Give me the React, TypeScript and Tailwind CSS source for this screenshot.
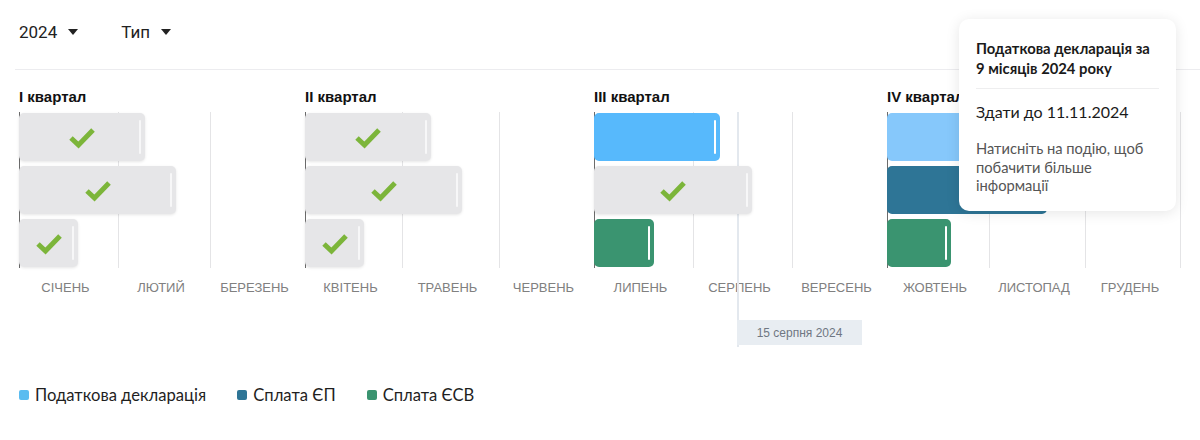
import React from "react";

type Bar = { w: number; kind: "done" | "blue" | "lightblue" | "teal" | "green" };

const quarters: {
  title: string;
  months: { name: string; w: string }[];
  bars: Bar[];
}[] = [
  {
    title: "I квартал",
    months: [
      { name: "СІЧЕНЬ", w: "w-[99px]" },
      { name: "ЛЮТИЙ", w: "w-[92px]" },
      { name: "БЕРЕЗЕНЬ", w: "w-[95px]" },
    ],
    bars: [
      { w: 126, kind: "done" },
      { w: 157, kind: "done" },
      { w: 59, kind: "done" },
    ],
  },
  {
    title: "II квартал",
    months: [
      { name: "КВІТЕНЬ", w: "w-[97px]" },
      { name: "ТРАВЕНЬ", w: "w-[97px]" },
      { name: "ЧЕРВЕНЬ", w: "w-[95px]" },
    ],
    bars: [
      { w: 126, kind: "done" },
      { w: 157, kind: "done" },
      { w: 59, kind: "done" },
    ],
  },
  {
    title: "III квартал",
    months: [
      { name: "ЛИПЕНЬ", w: "w-[99px]" },
      { name: "СЕРПЕНЬ", w: "w-[99px]" },
      { name: "ВЕРЕСЕНЬ", w: "w-[95px]" },
    ],
    bars: [
      { w: 126, kind: "blue" },
      { w: 158, kind: "done" },
      { w: 60, kind: "green" },
    ],
  },
  {
    title: "IV квартал",
    months: [
      { name: "ЖОВТЕНЬ", w: "w-[102px]" },
      { name: "ЛИСТОПАД", w: "w-[96px]" },
      { name: "ГРУДЕНЬ", w: "w-[96px]" },
    ],
    bars: [
      { w: 128, kind: "lightblue" },
      { w: 160, kind: "teal" },
      { w: 64, kind: "green" },
    ],
  },
];

const barBg: Record<Bar["kind"], string> = {
  done: "bg-[#e6e6e8] shadow-[0_1px_3px_rgba(0,0,0,0.10)]",
  blue: "bg-[#57b9fc]",
  lightblue: "bg-[#86c8fb]",
  teal: "bg-[#2e7596]",
  green: "bg-[#3a9470]",
};

function Check() {
  return (
    <svg width="28" height="24" viewBox="0 0 28 24">
      <path
        d="M3 13 L10.5 20 L25 5"
        fill="none"
        stroke="#7cb53a"
        strokeWidth="5"
        strokeLinejoin="miter"
      />
    </svg>
  );
}

function Caret() {
  return (
    <svg width="10" height="6" viewBox="0 0 10 6" className="ml-[11px]">
      <path d="M0 0 L10 0 L5 6 Z" fill="#222" />
    </svg>
  );
}

function BarView({ bar }: { bar: Bar }) {
  return (
    <div
      className={`relative h-[48px] rounded-[5px] flex items-center justify-center ${barBg[bar.kind]}`}
      style={{ width: bar.w }}
    >
      {bar.kind === "done" && <Check />}
      <div
        className={`absolute right-[4px] top-[7px] bottom-[7px] w-[2px] rounded-full ${
          bar.kind === "done" ? "bg-[#f7f7f8]" : "bg-white"
        }`}
      />
    </div>
  );
}

export default function App() {
  return (
    <div className="relative w-[1200px] h-[440px] overflow-hidden bg-white text-[#222]">
      {/* Header */}
      <div
        className="flex items-start h-[69px] pt-[22px] pl-[19px] gap-[43px] text-[17px] leading-[20px] text-[#222]"
        style={{ fontFamily: "Roboto, 'Liberation Sans', sans-serif" }}
      >
        <div className="flex items-center">
          <span>2024</span>
          <Caret />
        </div>
        <div className="flex items-center">
          <span>Тип</span>
          <Caret />
        </div>
      </div>
      <div className="ml-[15px] h-px bg-[#ececef]" />

      {/* Chart */}
      <div
        className="flex pl-[19px] pt-[19px]"
        style={{ fontFamily: "'Liberation Sans', Arial, sans-serif" }}
      >
        {quarters.map((q, qi) => (
          <div key={q.title} className="relative flex flex-col">
            <div className="text-[15px] leading-[16px] font-bold text-[#111] mb-[7px] whitespace-nowrap">
              {q.title}
            </div>
            <div className="relative h-[156px]">
              <div className="flex h-full">
                {q.months.map((m, mi) => (
                  <div
                    key={m.name}
                    className={`${m.w} h-full ${
                      mi === 0 ? "border-l border-[#6b6b6b]" : "border-l border-[#e4e4e6]"
                    } ${qi === 3 && mi === 2 ? "border-r" : ""}`}
                  />
                ))}
              </div>
              <div className="absolute inset-0 z-[2] pt-[1px] flex flex-col gap-[5px]">
                {q.bars.map((b, bi) => (
                  <BarView key={bi} bar={b} />
                ))}
              </div>
            </div>
            <div className="flex mt-[12px]">
              {q.months.map((m) => (
                <div
                  key={m.name}
                  className={`${m.w} pr-[6px] text-center text-[13px] leading-[16px] text-[#808080] whitespace-nowrap`}
                >
                  {m.name}
                </div>
              ))}
            </div>

            {qi === 2 && (
              <>
                <div className="absolute z-[1] left-[143px] top-[23px] h-[235px] w-[2px] bg-[#e3e8ee]" />
                <div className="absolute z-[1] left-[143px] top-[231px] w-[125px] h-[25px] bg-[#e8edf2] flex items-center justify-center text-[12px] text-[#6f7782] whitespace-nowrap">
                  15 серпня 2024
                </div>
              </>
            )}
          </div>
        ))}
      </div>

      {/* Legend */}
      <div
        className="flex items-center gap-[31px] pl-[19px] mt-[89px] text-[16.6px] leading-[20px] text-[#1f1f1f]"
        style={{ fontFamily: "Lato, 'Open Sans', sans-serif" }}
      >
        <div className="flex items-center gap-[6px]">
          <span className="w-[10px] h-[10px] rounded-[2px] bg-[#5bbcf0]" />
          <span>Податкова декларація</span>
        </div>
        <div className="flex items-center gap-[6px]">
          <span className="w-[10px] h-[10px] rounded-[2px] bg-[#2e7596]" />
          <span>Сплата ЄП</span>
        </div>
        <div className="flex items-center gap-[6px]">
          <span className="w-[10px] h-[10px] rounded-[2px] bg-[#3a9470]" />
          <span>Сплата ЄСВ</span>
        </div>
      </div>

      {/* Tooltip */}
      <div
        className="absolute z-10 left-[959px] top-[19px] w-[217px] h-[192px] rounded-[10px] bg-white shadow-[0_2px_14px_rgba(0,0,0,0.10)] px-[17px] pt-[19px]"
        style={{ fontFamily: "Lato, 'Open Sans', sans-serif" }}
      >
        <div className="text-[14.8px] leading-[20px] font-bold text-[#1a1a1a] whitespace-nowrap">
          Податкова декларація за
          <br />9 місяців 2024 року
        </div>
        <div className="mt-[10px] h-px bg-[#eeeeef]" />
        <div className="mt-[13px] text-[16px] leading-[20px] text-[#1a1a1a] whitespace-nowrap">
          Здати до 11.11.2024
        </div>
        <div className="mt-[17px] text-[14.7px] leading-[18.5px] text-[#555] whitespace-nowrap">
          Натисніть на подію, щоб
          <br />
          побачити більше
          <br />
          інформації
        </div>
      </div>
    </div>
  );
}
